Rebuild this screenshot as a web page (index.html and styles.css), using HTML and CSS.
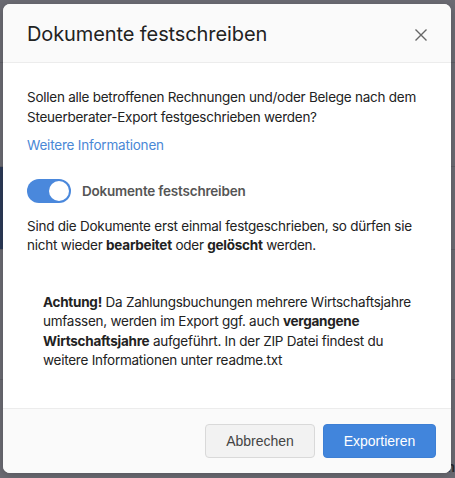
FILE: index.html
```html
<!DOCTYPE html>
<html lang="de">
<head>
<meta charset="utf-8">
<link rel="stylesheet" href="styles.css">
</head>
<body>
<div class="page">
  <div class="bg-row"></div>
  <div class="bg-row"></div>
  <div class="bg-row bg-blue"></div>
  <div class="bg-row"></div>
  <div class="bg-row bg-last"><span>Startdatum</span><span>Enddatum</span></div>
</div>
<div class="overlay">
  <div class="modal">
    <div class="modal-header">
      <h1 class="modal-title">Dokumente festschreiben</h1>
      <button class="close" aria-label="Schließen">
        <svg width="14" height="14" viewBox="0 0 14 14"><path d="M1.5 1.5L12.5 12.5M12.5 1.5L1.5 12.5" stroke="#666" stroke-width="1.4" fill="none"/></svg>
      </button>
    </div>
    <div class="modal-body">
      <p class="text">Sollen alle betroffenen Rechnungen und/oder Belege nach dem Steuerberater-Export festgeschrieben werden?</p>
      <a class="link" href="#">Weitere Informationen</a>
      <div class="toggle-row">
        <span class="toggle"><span class="knob"></span></span>
        <span class="toggle-label">Dokumente festschreiben</span>
      </div>
      <p class="text">Sind die Dokumente erst einmal festgeschrieben, so dürfen sie nicht wieder <b>bearbeitet</b> oder <b>gelöscht</b> werden.</p>
      <div class="notice">
        <p class="text"><b>Achtung!</b> Da Zahlungsbuchungen mehrere Wirtschaftsjahre umfassen, werden im Export ggf. auch <b>vergangene Wirtschaftsjahre</b> aufgeführt. In der ZIP Datei findest du weitere Informationen unter readme.txt</p>
      </div>
    </div>
    <div class="modal-footer">
      <button class="btn btn-default">Abbrechen</button>
      <button class="btn btn-primary">Exportieren</button>
    </div>
  </div>
</div>
</body>
</html>
```
FILE: styles.css
```css
* { box-sizing: border-box; }
html, body { margin: 0; padding: 0; }
body {
  width: 455px;
  height: 478px;
  overflow: hidden;
  background: #6b6b73;
  font-family: Inter, "Noto Sans", sans-serif;
  position: relative;
}
.page {
  display: flex;
  flex-direction: column;
  height: 478px;
}
.bg-row {
  height: 56px;
  border-bottom: 1px solid #5f5f67;
}
.bg-row:first-child { height: 63px; }
.bg-row:nth-child(2) { height: 104px; }
.bg-blue {
  height: 83px;
  background: linear-gradient(to right, #2c3a57 0, #2c3a57 8px, transparent 8px);
}
.bg-row:nth-child(4) { height: 130px; }
.bg-last {
  flex: 1;
  border-bottom: 0;
  display: flex;
  justify-content: space-between;
  align-items: flex-end;
  padding: 0 0 3px 193px;
  font-size: 14px;
  color: #2a2a2e;
  font-weight: 600;
  line-height: 16px;
}
.overlay {
  position: absolute;
  inset: 0;
  padding: 4px 4px 5px 3px;
}
.modal {
  height: 469px;
  background: #fff;
  border-radius: 7px;
  display: flex;
  flex-direction: column;
  overflow: hidden;
  box-shadow: 0 2px 8px rgba(0,0,0,0.2);
}
.modal-header {
  height: 59px;
  flex: none;
  background: #fafafa;
  border-bottom: 1px solid #ececec;
  display: flex;
  align-items: center;
  justify-content: space-between;
  padding: 0 23px 0 24px;
}
.modal-title {
  margin: 0;
  font-size: 20px;
  font-weight: 400;
  color: #222;
  letter-spacing: -0.1px;
  padding-top: 1px;
}
.close {
  border: 0;
  background: none;
  padding: 0;
  width: 14px;
  height: 14px;
  display: flex;
  margin-top: 4px;
}
.modal-body {
  flex: 1;
  padding: 25px 24px 0 24px;
}
.text {
  margin: 0;
  font-size: 13.5px;
  letter-spacing: -0.25px;
  line-height: 19.5px;
  color: #222;
}
.text b { font-weight: 700; }
.link {
  display: block;
  margin-top: 9px;
  font-size: 13.5px;
  letter-spacing: -0.2px;
  line-height: 19.5px;
  color: #4a88d6;
  text-decoration: none;
}
.toggle-row {
  display: flex;
  align-items: center;
  gap: 11px;
  margin: 23px 0 14px;
}
.toggle {
  width: 44px;
  height: 24px;
  border-radius: 12px;
  background: #4a88dc;
  display: flex;
  align-items: center;
  justify-content: flex-end;
  padding: 2px;
}
.knob {
  width: 20px;
  height: 20px;
  border-radius: 50%;
  background: #fff;
}
.toggle-label {
  font-size: 13.5px;
  letter-spacing: -0.2px;
  font-weight: 600;
  color: #555;
}
.notice {
  padding: 37px 6px 0 16px;
}
.modal-footer {
  flex: none;
  height: 65px;
  border-top: 1px solid #ececec;
  background: #fafafa;
  display: flex;
  justify-content: flex-end;
  align-items: flex-start;
  gap: 8px;
  padding: 15px 15px 0 0;
}
.btn {
  height: 34px;
  border-radius: 4px;
  font-family: "Liberation Sans", Arial, sans-serif;
  font-size: 14px;
  padding: 0;
}
.btn-default {
  width: 110px;
  background: #f2f2f2;
  border: 1px solid #d9d9d9;
  color: #444;
}
.btn-primary {
  width: 113px;
  background: #4185dc;
  border: 1px solid #3d7fd4;
  color: #fff;
}
```
